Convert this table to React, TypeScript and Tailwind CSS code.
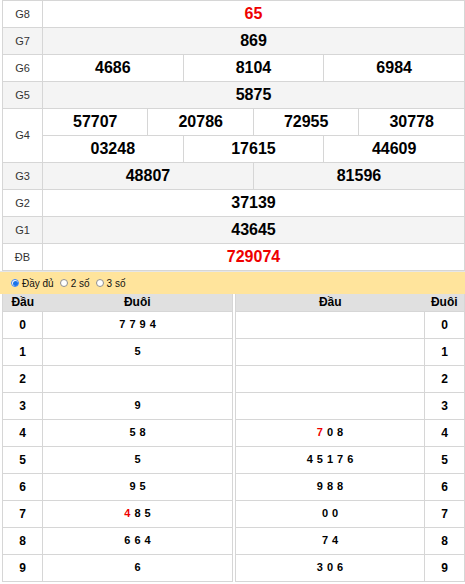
import React from 'react';

type Cell = { v: string; red?: boolean };
type Row = { label: string; cells: Cell[][]; alt?: boolean };

const rows: Row[] = [
  { label: 'G8', cells: [[{ v: '65', red: true }]] },
  { label: 'G7', cells: [[{ v: '869' }]], alt: true },
  { label: 'G6', cells: [[{ v: '4686' }, { v: '8104' }, { v: '6984' }]] },
  { label: 'G5', cells: [[{ v: '5875' }]], alt: true },
  {
    label: 'G4',
    cells: [
      [{ v: '57707' }, { v: '20786' }, { v: '72955' }, { v: '30778' }],
      [{ v: '03248' }, { v: '17615' }, { v: '44609' }],
    ],
  },
  { label: 'G3', cells: [[{ v: '48807' }, { v: '81596' }]], alt: true },
  { label: 'G2', cells: [[{ v: '37139' }]] },
  { label: 'G1', cells: [[{ v: '43645' }]], alt: true },
  { label: 'ĐB', cells: [[{ v: '729074', red: true }]] },
];

// each digit list: [digit, red?]
const duoi: [string, boolean][][] = [
  [['7', false], ['7', false], ['9', false], ['4', false]],
  [['5', false]],
  [],
  [['9', false]],
  [['5', false], ['8', false]],
  [['5', false]],
  [['9', false], ['5', false]],
  [['4', true], ['8', false], ['5', false]],
  [['6', false], ['6', false], ['4', false]],
  [['6', false]],
];

const dau: [string, boolean][][] = [
  [],
  [],
  [],
  [],
  [['7', true], ['0', false], ['8', false]],
  [['4', false], ['5', false], ['1', false], ['7', false], ['6', false]],
  [['9', false], ['8', false], ['8', false]],
  [['0', false], ['0', false]],
  [['7', false], ['4', false]],
  [['3', false], ['0', false], ['6', false]],
];

const spanFor = (n: number) => (n === 1 ? 12 : n === 2 ? 6 : n === 3 ? 4 : 3);

function Digits({ list }: { list: [string, boolean][] }) {
  return (
    <span className="inline-flex gap-[4px]">
      {list.map(([d, red], i) => (
        <span key={i} className={red ? 'text-[#e00]' : ''}>
          {d}
        </span>
      ))}
    </span>
  );
}

function Radio({ checked, label }: { checked?: boolean; label: string }) {
  return (
    <label className="flex items-center gap-[3px]">
      <span
        className={
          checked
            ? 'flex h-[8px] w-[8px] items-center justify-center rounded-full border border-[#3b82f6] bg-white'
            : 'h-[8px] w-[8px] rounded-full border border-[#8f8f8f] bg-white'
        }
      >
        {checked && <span className="h-[5px] w-[5px] rounded-full bg-[#1a73e8]" />}
      </span>
      <span>{label}</span>
    </label>
  );
}

export default function App() {
  return (
    <div className="w-[465px] bg-white font-['Liberation_Sans',Arial,sans-serif] text-black">
      <table className="ml-[2px] w-[463px] table-fixed border-collapse border border-[#d6d6d6]">
        <colgroup>
          <col className="w-[40px]" />
          {Array.from({ length: 12 }).map((_, i) => (
            <col key={i} />
          ))}
        </colgroup>
        <tbody>
          {rows.map((r) =>
            r.cells.map((line, li) => (
              <tr key={r.label + li} className={r.alt ? 'bg-[#f4f4f4]' : 'bg-white'}>
                {li === 0 && (
                  <td
                    rowSpan={r.cells.length}
                    className="border border-[#d6d6d6] text-center text-[11px] text-[#333]"
                  >
                    {r.label}
                  </td>
                )}
                {line.map((c, ci) => (
                  <td
                    key={ci}
                    colSpan={spanFor(line.length)}
                    className={
                      'h-[27px] border border-[#d6d6d6] p-0 text-center text-[16px] leading-none font-bold ' +
                      (c.red ? 'text-[#e00]' : 'text-black')
                    }
                  >
                    {c.v}
                  </td>
                ))}
              </tr>
            ))
          )}
        </tbody>
      </table>

      <div className="flex h-[23px] items-center gap-[6px] border-t border-[#e6e6e6] bg-[#ffe49c] pl-[11px] text-[10px] text-[#111]">
        <Radio checked label="Đầy đủ" />
        <Radio label="2 số" />
        <Radio label="3 số" />
      </div>

      <div className="ml-[2px] flex w-[463px] gap-[2px]">
        <table className="w-[231px] table-fixed border-collapse border border-t-0 border-[#d6d6d6] text-[12px] font-bold">
          <colgroup>
            <col className="w-[40px]" />
            <col />
          </colgroup>
          <thead>
            <tr className="bg-[#e0e0e0]">
              <th className="h-[17px] p-0 text-center leading-none font-bold">Đầu</th>
              <th className="h-[17px] p-0 text-center leading-none font-bold">Đuôi</th>
            </tr>
          </thead>
          <tbody>
            {duoi.map((list, i) => (
              <tr key={i}>
                <td className="h-[27px] border border-[#d6d6d6] p-0 text-center leading-none">{i}</td>
                <td className="h-[27px] border border-[#d6d6d6] p-0 text-center text-[11px] leading-none">
                  <Digits list={list} />
                </td>
              </tr>
            ))}
          </tbody>
        </table>

        <table className="w-[230px] table-fixed border-collapse border border-t-0 border-[#d6d6d6] text-[12px] font-bold">
          <colgroup>
            <col />
            <col className="w-[40px]" />
          </colgroup>
          <thead>
            <tr className="bg-[#e0e0e0]">
              <th className="h-[17px] p-0 text-center leading-none font-bold">Đầu</th>
              <th className="h-[17px] p-0 text-center leading-none font-bold">Đuôi</th>
            </tr>
          </thead>
          <tbody>
            {dau.map((list, i) => (
              <tr key={i}>
                <td className="h-[27px] border border-[#d6d6d6] p-0 text-center text-[11px] leading-none">
                  <Digits list={list} />
                </td>
                <td className="h-[27px] border border-[#d6d6d6] p-0 text-center leading-none">{i}</td>
              </tr>
            ))}
          </tbody>
        </table>
      </div>
    </div>
  );
}
